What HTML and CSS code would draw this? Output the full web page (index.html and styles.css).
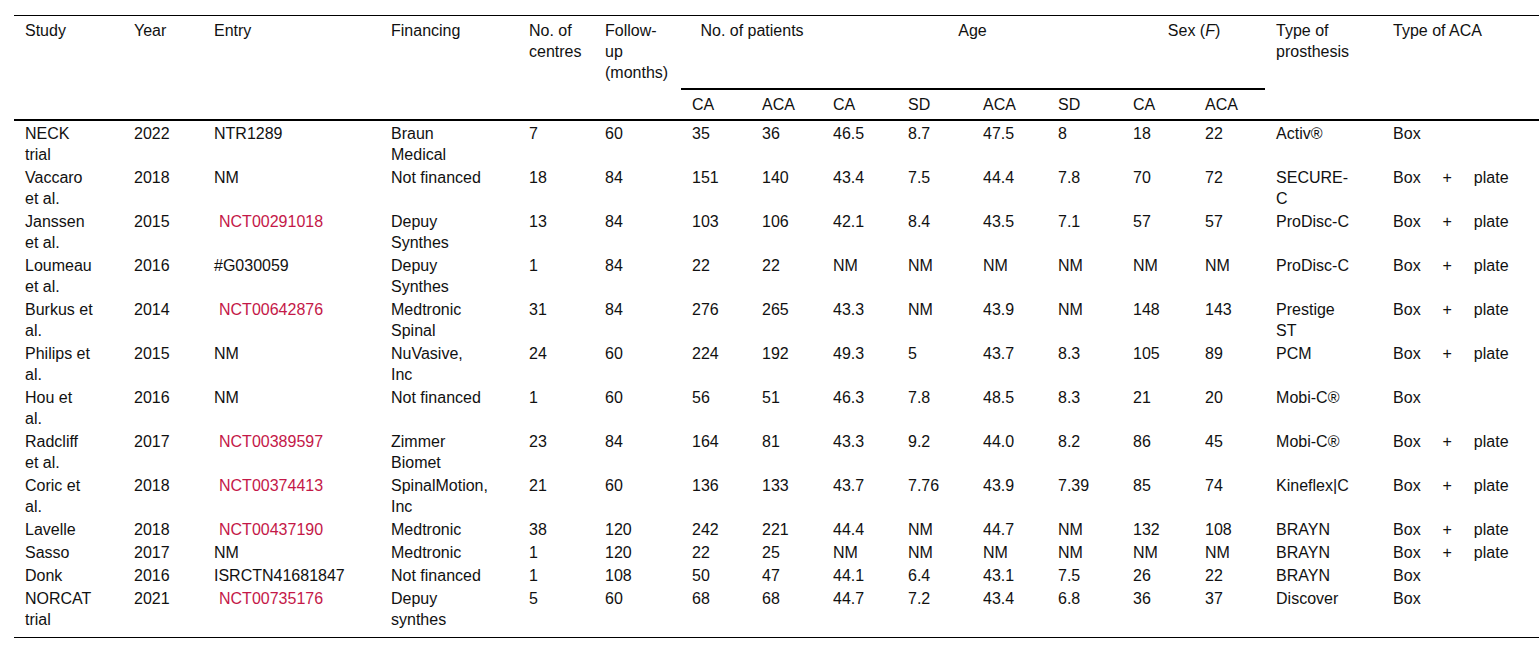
FILE: index.html
```html
<!DOCTYPE html>
<html lang="en">
<head>
<meta charset="utf-8">
<title>Studies table</title>
<link rel="stylesheet" href="styles.css">
</head>
<body>
<table class="data">
  <colgroup>
    <col class="c-study"><col class="c-year"><col class="c-entry"><col class="c-fin">
    <col class="c-cent"><col class="c-fu">
    <col class="c-p1"><col class="c-p2">
    <col class="c-a1"><col class="c-a2"><col class="c-a3"><col class="c-a4">
    <col class="c-s1"><col class="c-s2">
    <col class="c-pro"><col class="c-aca">
  </colgroup>
  <thead>
    <tr class="hrow1">
      <th rowspan="2">Study</th>
      <th rowspan="2">Year</th>
      <th rowspan="2">Entry</th>
      <th rowspan="2">Financing</th>
      <th rowspan="2">No. of<br>centres</th>
      <th rowspan="2">Follow-<br>up<br>(months)</th>
      <th colspan="2" class="grp">No. of patients</th>
      <th colspan="4" class="grp">Age</th>
      <th colspan="2" class="grp">Sex (<i>F</i>)</th>
      <th rowspan="2">Type of<br>prosthesis</th>
      <th rowspan="2">Type of ACA</th>
    </tr>
    <tr class="hrow2">
      <th>CA</th><th>ACA</th>
      <th>CA</th><th>SD</th><th>ACA</th><th>SD</th>
      <th>CA</th><th>ACA</th>
    </tr>
  </thead>
  <tbody>
    <tr>
      <td>NECK<br>trial</td><td>2022</td><td>NTR1289</td><td>Braun<br>Medical</td><td>7</td><td>60</td>
      <td>35</td><td>36</td><td>46.5</td><td>8.7</td><td>47.5</td><td>8</td><td>18</td><td>22</td>
      <td>Activ®</td><td>Box</td>
    </tr>
    <tr>
      <td>Vaccaro<br>et al.</td><td>2018</td><td>NM</td><td>Not financed</td><td>18</td><td>84</td>
      <td>151</td><td>140</td><td>43.4</td><td>7.5</td><td>44.4</td><td>7.8</td><td>70</td><td>72</td>
      <td>SECURE-<br>C</td><td><span class="bp">Box + plate</span></td>
    </tr>
    <tr>
      <td>Janssen<br>et al.</td><td>2015</td><td><a class="reg">NCT00291018</a></td><td>Depuy<br>Synthes</td><td>13</td><td>84</td>
      <td>103</td><td>106</td><td>42.1</td><td>8.4</td><td>43.5</td><td>7.1</td><td>57</td><td>57</td>
      <td>ProDisc-C</td><td><span class="bp">Box + plate</span></td>
    </tr>
    <tr>
      <td>Loumeau<br>et al.</td><td>2016</td><td>#G030059</td><td>Depuy<br>Synthes</td><td>1</td><td>84</td>
      <td>22</td><td>22</td><td>NM</td><td>NM</td><td>NM</td><td>NM</td><td>NM</td><td>NM</td>
      <td>ProDisc-C</td><td><span class="bp">Box + plate</span></td>
    </tr>
    <tr>
      <td>Burkus et<br>al.</td><td>2014</td><td><a class="reg">NCT00642876</a></td><td>Medtronic<br>Spinal</td><td>31</td><td>84</td>
      <td>276</td><td>265</td><td>43.3</td><td>NM</td><td>43.9</td><td>NM</td><td>148</td><td>143</td>
      <td>Prestige<br>ST</td><td><span class="bp">Box + plate</span></td>
    </tr>
    <tr>
      <td>Philips et<br>al.</td><td>2015</td><td>NM</td><td>NuVasive,<br>Inc</td><td>24</td><td>60</td>
      <td>224</td><td>192</td><td>49.3</td><td>5</td><td>43.7</td><td>8.3</td><td>105</td><td>89</td>
      <td>PCM</td><td><span class="bp">Box + plate</span></td>
    </tr>
    <tr>
      <td>Hou et<br>al.</td><td>2016</td><td>NM</td><td>Not financed</td><td>1</td><td>60</td>
      <td>56</td><td>51</td><td>46.3</td><td>7.8</td><td>48.5</td><td>8.3</td><td>21</td><td>20</td>
      <td>Mobi-C®</td><td>Box</td>
    </tr>
    <tr>
      <td>Radcliff<br>et al.</td><td>2017</td><td><a class="reg">NCT00389597</a></td><td>Zimmer<br>Biomet</td><td>23</td><td>84</td>
      <td>164</td><td>81</td><td>43.3</td><td>9.2</td><td>44.0</td><td>8.2</td><td>86</td><td>45</td>
      <td>Mobi-C®</td><td><span class="bp">Box + plate</span></td>
    </tr>
    <tr>
      <td>Coric et<br>al.</td><td>2018</td><td><a class="reg">NCT00374413</a></td><td>SpinalMotion,<br>Inc</td><td>21</td><td>60</td>
      <td>136</td><td>133</td><td>43.7</td><td>7.76</td><td>43.9</td><td>7.39</td><td>85</td><td>74</td>
      <td>Kineflex|C</td><td><span class="bp">Box + plate</span></td>
    </tr>
    <tr>
      <td>Lavelle</td><td>2018</td><td><a class="reg">NCT00437190</a></td><td>Medtronic</td><td>38</td><td>120</td>
      <td>242</td><td>221</td><td>44.4</td><td>NM</td><td>44.7</td><td>NM</td><td>132</td><td>108</td>
      <td>BRAYN</td><td><span class="bp">Box + plate</span></td>
    </tr>
    <tr>
      <td>Sasso</td><td>2017</td><td>NM</td><td>Medtronic</td><td>1</td><td>120</td>
      <td>22</td><td>25</td><td>NM</td><td>NM</td><td>NM</td><td>NM</td><td>NM</td><td>NM</td>
      <td>BRAYN</td><td><span class="bp">Box + plate</span></td>
    </tr>
    <tr>
      <td>Donk</td><td>2016</td><td>ISRCTN41681847</td><td>Not financed</td><td>1</td><td>108</td>
      <td>50</td><td>47</td><td>44.1</td><td>6.4</td><td>43.1</td><td>7.5</td><td>26</td><td>22</td>
      <td>BRAYN</td><td>Box</td>
    </tr>
    <tr class="last">
      <td>NORCAT<br>trial</td><td>2021</td><td><a class="reg">NCT00735176</a></td><td>Depuy<br>synthes</td><td>5</td><td>60</td>
      <td>68</td><td>68</td><td>44.7</td><td>7.2</td><td>43.4</td><td>6.8</td><td>36</td><td>37</td>
      <td>Discover</td><td>Box</td>
    </tr>
  </tbody>
</table>
</body>
</html>
```

FILE: styles.css
```css
html, body {
  margin: 0;
  padding: 0;
  background: #ffffff;
}

body {
  font-family: "Liberation Sans", Arial, sans-serif;
  font-size: 16px;
  color: #111;
}

.data {
  margin: 15px 0 0 14px;
  width: 1525px;
  border-collapse: collapse;
  table-layout: fixed;
  border-top: 1px solid #000;
  border-bottom: 1px solid #000;
}

.c-study { width: 109px; }
.c-year { width: 80px; }
.c-entry { width: 177px; }
.c-fin { width: 138px; }
.c-cent { width: 76px; }
.c-fu { width: 87px; }
.c-p1 { width: 70px; }
.c-p2 { width: 71px; }
.c-a1, .c-a2, .c-a3, .c-a4 { width: 75px; }
.c-s1 { width: 72px; }
.c-s2 { width: 71px; }
.c-pro { width: 117px; }
.c-aca { width: 157px; }

th, td {
  text-align: left;
  vertical-align: top;
  font-weight: normal;
  line-height: 21px;
  white-space: nowrap;
  padding: 2px 10px 0 11px;
}

th {
  padding-top: 4px;
  padding-bottom: 4px;
}

.hrow1 {
  height: 73px;
}

.hrow2 {
  height: 30px;
}

.hrow1 th.grp {
  text-align: center;
  border-bottom: 2px solid #000;
}

thead {
  border-bottom: 2px solid #000;
}

.reg {
  color: #c41848;
  text-decoration: none;
  margin-left: 5px;
}

.bp {
  word-spacing: 17.5px;
}

.last td {
  padding-bottom: 7px;
}
```
